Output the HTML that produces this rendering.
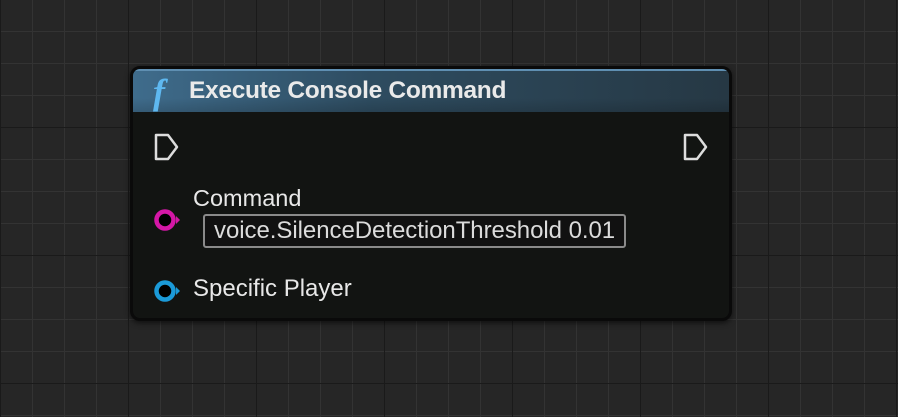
<!DOCTYPE html>
<html><head><style>
html,body{margin:0;padding:0}
body{width:898px;height:417px;overflow:hidden;position:relative;
background-color:#262626;
background-image:
linear-gradient(to right,#1a1a1a 1px,transparent 1px),
linear-gradient(to bottom,#1a1a1a 1px,transparent 1px),
linear-gradient(to right,#333 1px,transparent 1px),
linear-gradient(to bottom,#333 1px,transparent 1px);
background-size:128px 128px,128px 128px,32px 32px,32px 32px;
background-position:0 0,0 -1px,0 0,0 -1px;
font-family:"Liberation Sans",sans-serif;}
.node{position:absolute;left:130px;top:66px;width:596px;height:249px;background:#121412;border:3px solid #0a0a0a;border-radius:10px;box-shadow:0 2px 6px rgba(0,0,0,.6);overflow:hidden}
.hdr{position:absolute;left:0;top:0;right:0;height:43px;background:linear-gradient(to right,#3f6c8c,#2e4c60 40%,#263844);border-top:2px solid #5f8fb2;box-sizing:border-box}
.hdr:after{content:"";position:absolute;left:0;right:0;bottom:0;height:14px;background:linear-gradient(to bottom,rgba(0,0,0,0),rgba(0,0,0,.15))}
.t{position:absolute;color:#e8e8e8;white-space:nowrap}
.box{position:absolute;left:70px;top:145px;width:423px;height:34px;border:2px solid #8a8a8a;border-radius:3px;box-sizing:border-box;background:#111;color:#dcdcdc;font-size:24px;line-height:30px;padding-left:9px;letter-spacing:-0.05px}
</style></head><body>
<div class="node">
<div class="hdr"></div>
<div class="t" style="left:20px;top:2px;font-family:'Liberation Serif',serif;font-style:italic;font-weight:bold;font-size:36px;color:#5eb8f0;">f</div>
<div class="t" style="left:56px;top:8px;font-size:24.5px;font-weight:bold;color:#eaeaea;letter-spacing:-0.3px">Execute Console Command</div>
<svg style="position:absolute;left:20px;top:64px" width="30" height="30"><path d="M3 2 H15 L24 14 L15 26 H3 Z" fill="none" stroke="#ddd" stroke-width="2.5" stroke-linejoin="round"/></svg>
<svg style="position:absolute;left:549px;top:64px" width="30" height="30"><path d="M3 2 H15 L24 14 L15 26 H3 Z" fill="none" stroke="#ddd" stroke-width="2.5" stroke-linejoin="round"/></svg>
<div class="t" style="left:60px;top:116px;font-size:23.5px">Command</div>
<svg style="position:absolute;left:19px;top:136px" width="30" height="30"><circle cx="13" cy="15" r="8.5" fill="#000" stroke="#d417a6" stroke-width="4.5"/><path d="M24 11 L28 15 L24 19Z" fill="#d417a6"/></svg>
<div class="box">voice.SilenceDetectionThreshold 0.01</div>
<svg style="position:absolute;left:19px;top:207px" width="30" height="30"><circle cx="13" cy="15" r="8.5" fill="#000" stroke="#1b9ad8" stroke-width="4.5"/><path d="M24 11 L28 15 L24 19Z" fill="#1b9ad8"/></svg>
<div class="t" style="left:60px;top:206px;font-size:24px">Specific Player</div>
</div>
</body></html>
